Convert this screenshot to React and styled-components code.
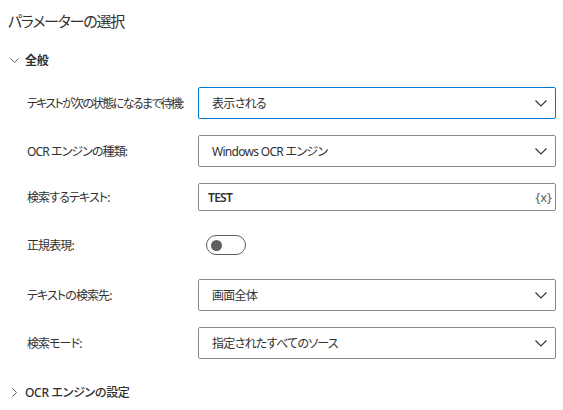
import React from 'react';
import styled, { createGlobalStyle } from 'styled-components';

const GlobalStyle = createGlobalStyle`
  html, body {
    margin: 0;
    padding: 0;
    background: #fff;
  }
  body {
    font-family: "Noto Sans", "Noto Sans CJK JP", sans-serif;
    font-feature-settings: "palt";
    color: #323130;
  }
`;

const Page = styled.div`
  width: 563px;
  height: 410px;
  padding: 0 8px;
  box-sizing: border-box;
  overflow: hidden;
`;

const Title = styled.h1`
  margin: 0;
  padding-top: 10px;
  font-size: 15px;
  line-height: 22px;
  font-weight: 400;
  letter-spacing: -1.2px;
`;

const SectionHeader = styled.div`
  display: flex;
  align-items: center;
  height: 24px;
  margin-top: ${props => props.gap}px;
  font-size: 12px;
  letter-spacing: -0.3px;
  font-weight: ${props => (props.open ? 600 : 500)};
`;

const Caret = styled.span`
  display: flex;
  align-items: center;
  justify-content: center;
  width: 12px;
  margin-right: 5px;
  flex: none;
`;

const Form = styled.div`
  display: grid;
  grid-template-columns: 171px 358px;
  grid-template-rows: 32px 32px 28px 36px 32px 32px;
  row-gap: 16px;
  margin: 15px 0 0 19px;
`;

const Label = styled.label`
  display: flex;
  align-items: center;
  font-size: 12px;
  letter-spacing: ${props => (props.tight ? -1.7 : -0.9)}px;
  white-space: nowrap;
`;

const FieldBox = styled.div`
  display: flex;
  align-items: center;
  box-sizing: border-box;
  height: 100%;
  border: 1px solid ${props => (props.focused ? '#0078d4' : '#8a8886')};
  border-radius: 2px;
  padding: 0 ${props => (props.input ? 3 : 8)}px 0 ${props => (props.input ? 9 : 13)}px;
  font-size: 12px;
  letter-spacing: -0.7px;
  font-weight: ${props => (props.input ? 600 : 400)};
  background: #fff;
`;

const Value = styled.span`
  flex: 1;
  white-space: nowrap;
`;

const VarButton = styled.span`
  font-size: 13px;
  color: #605e5c;
  font-weight: 400;
  letter-spacing: 0;
`;

const ToggleCell = styled.div`
  display: flex;
  align-items: center;
  padding-left: 8px;
`;

const Toggle = styled.div`
  display: flex;
  align-items: center;
  box-sizing: border-box;
  width: 40px;
  height: 20px;
  border: 1px solid #605e5c;
  border-radius: 10px;
  padding-left: 4px;
  &::before {
    content: '';
    width: 11px;
    height: 11px;
    border-radius: 50%;
    background: #605e5c;
  }
`;

const Chevron = ({ dir = 'down' }) =>
  dir === 'down' ? (
    <svg width="12" height="7" viewBox="0 0 12 7">
      <path d="M0.5 0.5 L6 6 L11.5 0.5" fill="none" stroke="#323130" strokeWidth="1.1" />
    </svg>
  ) : (
    <svg width="5" height="9" viewBox="0 0 5 9">
      <path d="M0.5 0.5 L4.5 4.5 L0.5 8.5" fill="none" stroke="#605e5c" strokeWidth="1" />
    </svg>
  );

const SmallChevronDown = () => (
  <svg width="9" height="5" viewBox="0 0 9 5">
    <path d="M0.5 0.5 L4.5 4.5 L8.5 0.5" fill="none" stroke="#605e5c" strokeWidth="1" />
  </svg>
);

const Dropdown = ({ value, focused }) => (
  <FieldBox focused={focused}>
    <Value>{value}</Value>
    <Chevron />
  </FieldBox>
);

export default function App() {
  return (
    <Page>
      <GlobalStyle />
      <Title>パラメーターの選択</Title>
      <SectionHeader gap={16} open>
        <Caret>
          <SmallChevronDown />
        </Caret>
        <span>全般</span>
      </SectionHeader>
      <Form>
        <Label tight>テキストが次の状態になるまで待機:</Label>
        <Dropdown value="表示される" focused />

        <Label>OCR エンジンの種類:</Label>
        <Dropdown value="Windows OCR エンジン" />

        <Label>検索するテキスト:</Label>
        <FieldBox input>
          <Value>TEST</Value>
          <VarButton>{'{x}'}</VarButton>
        </FieldBox>

        <Label>正規表現:</Label>
        <ToggleCell>
          <Toggle />
        </ToggleCell>

        <Label>テキストの検索先:</Label>
        <Dropdown value="画面全体" />

        <Label>検索モード:</Label>
        <Dropdown value="指定されたすべてのソース" />
      </Form>
      <SectionHeader gap={21}>
        <Caret>
          <Chevron dir="right" />
        </Caret>
        <span>OCR エンジンの設定</span>
      </SectionHeader>
    </Page>
  );
}
